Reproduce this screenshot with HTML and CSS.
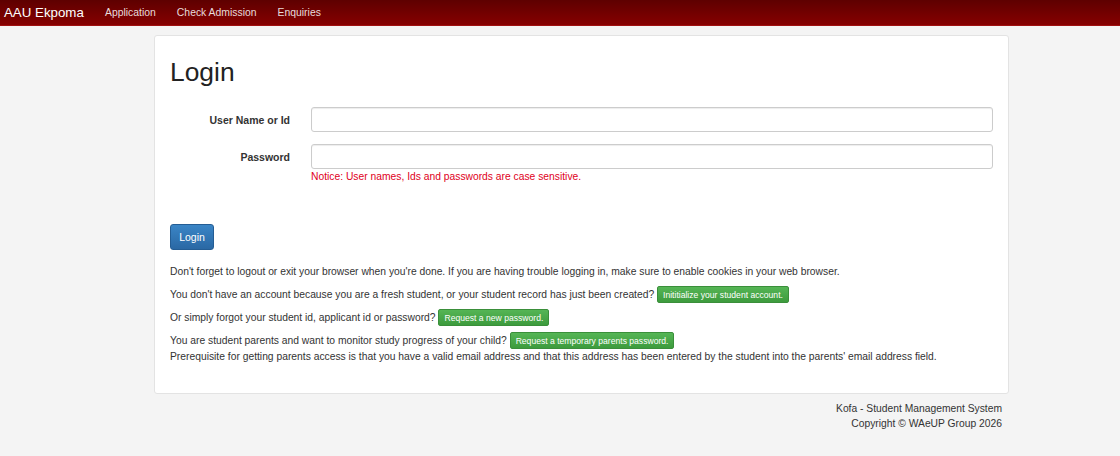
FILE: index.html
```html
<!DOCTYPE html>
<html>
<head>
    <link rel="stylesheet" href="styles.css">
</head>
<body>
    <div class="navbar">
        <span class="brand">AAU Ekpoma</span>
        <a class="nav-link" href="#">Application</a>
        <a class="nav-link" href="#">Check Admission</a>
        <a class="nav-link" href="#">Enquiries</a>
    </div>

    <div class="page">
        <div class="card">
            <h1>Login</h1>

            <div class="form-row">
                <label class="form-label">User Name or Id</label>
                <div class="form-field">
                    <input class="form-input" type="text">
                </div>
            </div>
            <div class="form-row">
                <label class="form-label">Password</label>
                <div class="form-field">
                    <input class="form-input" type="password">
                    <div class="notice">Notice: User names, Ids and passwords are case sensitive.</div>
                </div>
            </div>

            <button class="btn-login">Login</button>

            <p class="info">Don't forget to logout or exit your browser when you're done. If you are having trouble logging in, make sure to enable cookies in your web browser.</p>
            <p class="info">You don't have an account because you are a fresh student, or your student record has just been created? <a class="btn-green" href="#">Inititialize your student account.</a></p>
            <p class="info">Or simply forgot your student id, applicant id or password? <a class="btn-green" href="#">Request a new password.</a></p>
            <p class="info">You are student parents and want to monitor study progress of your child? <a class="btn-green" href="#">Request a temporary parents password.</a><br>
            Prerequisite for getting parents access is that you have a valid email address and that this address has been entered by the student into the parents' email address field.</p>
        </div>

        <div class="footer">
            Kofa - Student Management System<br>
            Copyright &copy; WAeUP Group 2026
        </div>
    </div>
</body>
</html>
```

FILE: styles.css
```css
body {
    margin: 0;
    padding: 0;
    background-color: #f4f4f4;
    font-family: "Liberation Sans", Arial, sans-serif;
    font-size: 10.3px;
    color: #333;
}

.navbar {
    height: 25px;
    background: linear-gradient(to bottom, #5e0000, #860000);
    border-bottom: 1px solid #a01010;
    display: flex;
    align-items: center;
}

.brand {
    color: #fff;
    font-size: 13.3px;
    padding-left: 4px;
    width: 101px;
}

.nav-link {
    color: #e8dcdc;
    text-decoration: none;
    font-size: 10.4px;
    margin-right: 21px;
}

.page {
    width: 855px;
    margin-left: 154px;
    padding-top: 9px;
}

.card {
    background-color: #fff;
    border: 1px solid #e3e3e3;
    border-radius: 3px;
    padding: 18px 15px 22px 15px;
}

h1 {
    font-size: 26.4px;
    font-weight: normal;
    margin: 0 0 17px 0;
    color: #222;
    line-height: 36px;
}

.form-row {
    display: grid;
    grid-template-columns: 127px 1fr;
    column-gap: 14px;
    margin-bottom: 11px;
}

.form-label {
    font-weight: bold;
    font-size: 10.5px;
    text-align: right;
    padding-right: 7px;
    line-height: 26px;
}

.form-input {
    width: 100%;
    box-sizing: border-box;
    height: 25px;
    border: 1px solid #ccc;
    border-radius: 3px;
    box-shadow: inset 0 1px 1px rgba(0,0,0,0.075);
    margin: 0;
}

.notice {
    color: #e0001b;
    font-size: 10.3px;
    margin-top: 2px;
}

.btn-login {
    margin-top: 31px;
    background: linear-gradient(to bottom, #3a85c6, #2a68a4);
    border: 1px solid #245d94;
    color: #fff;
    font-family: "Liberation Sans", Arial, sans-serif;
    font-size: 10.5px;
    width: 44px;
    height: 26px;
    padding: 0;
    border-radius: 3px;
    margin-bottom: 14px;
}

.info {
    margin: 0 0 6px 0;
    line-height: 16px;
}

.btn-green {
    display: inline-block;
    background: linear-gradient(to bottom, #55b555, #3d9b3d);
    border: 1px solid #3a8f3a;
    color: #fff;
    text-decoration: none;
    font-size: 8.6px;
    padding: 3px 5px 2px 5px;
    border-radius: 2px;
    line-height: 10px;
}

.footer {
    text-align: right;
    padding: 7px 7px 0 0;
    line-height: 15px;
    color: #333;
}
```
